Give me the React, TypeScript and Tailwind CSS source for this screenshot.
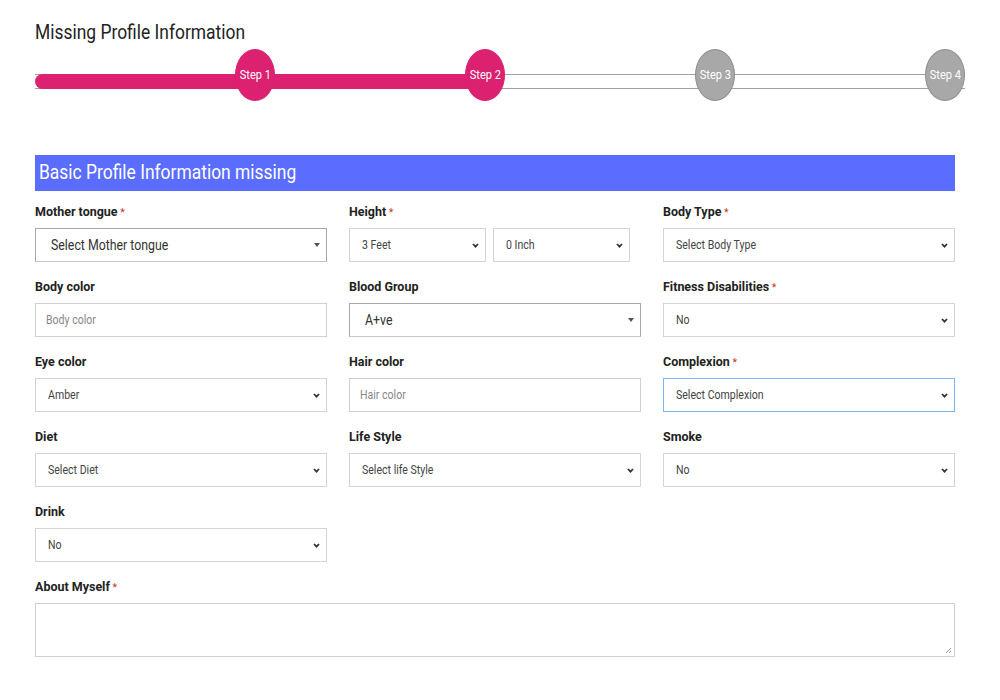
import React from "react";

const Chevron = () => (
  <svg width="7" height="5" viewBox="0 0 7 5" className="shrink-0">
    <path d="M1 1 L3.5 3.6 L6 1" fill="none" stroke="#333" strokeWidth="1.8" />
  </svg>
);

const Tri = () => (
  <svg width="6" height="4" viewBox="0 0 6 4" className="shrink-0">
    <path d="M0 0 L6 0 L3 4 Z" fill="#555" />
  </svg>
);

function Sq({ children, s = "n" }: { children: React.ReactNode; s?: "n" | "m" | "l" }) {
  const cls =
    s === "l"
      ? "inline-block whitespace-nowrap origin-left scale-x-[0.96]"
      : s === "m"
      ? "inline-block whitespace-nowrap origin-left scale-x-[0.83]"
      : "inline-block whitespace-nowrap origin-left scale-x-[0.88]";
  return <span className={cls}>{children}</span>;
}

function Label({ text, req }: { text: string; req?: boolean }) {
  return (
    <div className="h-[17px] text-[13px] font-bold text-[#222] leading-[13px] mb-[6px]">
      <Sq s="l">
        {text}
        {req && <span className="text-[#c0392b] font-normal text-[11px]"> *</span>}
      </Sq>
    </div>
  );
}

function Select({ value, focus, w }: { value: string; focus?: boolean; w?: string }) {
  return (
    <div
      className={`h-[34px] ${w ?? "w-full"} flex items-center justify-between pl-[12px] pr-[6px] bg-white border ${
        focus ? "border-[#7fb5f0]" : "border-[#d4d4d4]"
      } text-[12px] text-[#444]`}
    >
      <Sq>{value}</Sq>
      <Chevron />
    </div>
  );
}

function OldSelect({ value }: { value: string }) {
  return (
    <div className="h-[34px] w-full flex items-center justify-between pl-[15px] pr-[6px] bg-white border border-[#a9a9a9] border-b-[#c8c8c8] text-[14px] text-[#333]">
      <Sq>{value}</Sq>
      <Tri />
    </div>
  );
}

function Input({ ph }: { ph: string }) {
  return (
    <div className="h-[34px] w-full flex items-center pl-[10px] bg-white border border-[#cfcfcf] text-[12px] text-[#888]">
      <Sq>{ph}</Sq>
    </div>
  );
}

const steps = [
  { n: 1, on: true },
  { n: 2, on: true },
  { n: 3, on: false },
  { n: 4, on: false },
];

export default function App() {
  return (
    <div
      className="w-[1000px] h-[700px] bg-white overflow-hidden"
      style={{ fontFamily: "'Roboto', 'Liberation Sans', sans-serif" }}
    >
      <div className="pl-[35px] pt-[18px]">
        <h1 className="text-[21px] text-[#222] leading-[28px] h-[28px]">
          <Sq s="m">Missing Profile Information</Sq>
        </h1>
        <div className="relative w-[930px] h-[52px] mt-[3px]">
          <div className="absolute left-0 right-0 top-[25px] h-[15px] border-t border-b border-[#a0a0a0]" />
          <div className="absolute left-0 w-[450px] top-[25px] h-[15px] bg-[#dc2170] rounded-l-full" />
          <div className="relative flex justify-end gap-[190px] h-full">
            {steps.map((s) => (
              <div
                key={s.n}
                className={`w-[40px] h-[52px] rounded-[50%] flex items-center justify-center text-white text-[13px] border ${
                  s.on ? "bg-[#dc2170] border-[#dc2170]" : "bg-[#a8a8a8] border-[#8e8e8e]"
                }`}
              >
                <span className="whitespace-nowrap -mt-[1px] inline-block scale-x-[0.85]">Step {s.n}</span>
              </div>
            ))}
          </div>
        </div>
      </div>

      <div className="pl-[35px] pr-[45px] mt-[54px]">
        <div className="h-[36px] bg-[#5a6dff] flex items-center pl-[4px] text-white text-[21px]">
          <Sq s="m">Basic Profile Information missing</Sq>
        </div>

        <div className="grid grid-cols-3 gap-x-[22px] gap-y-[18px] mt-[14px]">
          <div>
            <Label text="Mother tongue" req />
            <OldSelect value="Select Mother tongue" />
          </div>
          <div>
            <Label text="Height" req />
            <div className="flex gap-[7px]">
              <Select value="3 Feet" w="w-[137px]" />
              <Select value="0 Inch" w="w-[137px]" />
            </div>
          </div>
          <div>
            <Label text="Body Type" req />
            <Select value="Select Body Type" />
          </div>

          <div>
            <Label text="Body color" />
            <Input ph="Body color" />
          </div>
          <div>
            <Label text="Blood Group" />
            <OldSelect value="A+ve" />
          </div>
          <div>
            <Label text="Fitness Disabilities" req />
            <Select value="No" />
          </div>

          <div>
            <Label text="Eye color" />
            <Select value="Amber" />
          </div>
          <div>
            <Label text="Hair color" />
            <Input ph="Hair color" />
          </div>
          <div>
            <Label text="Complexion" req />
            <Select value="Select Complexion" focus />
          </div>

          <div>
            <Label text="Diet" />
            <Select value="Select Diet" />
          </div>
          <div>
            <Label text="Life Style" />
            <Select value="Select life Style" />
          </div>
          <div>
            <Label text="Smoke" />
            <Select value="No" />
          </div>

          <div>
            <Label text="Drink" />
            <Select value="No" />
          </div>
          <div />
          <div />

          <div className="col-span-3">
            <Label text="About Myself" req />
            <div className="relative h-[54px] w-full border border-[#cfcfcf] bg-white">
              <svg width="7" height="7" viewBox="0 0 7 7" className="absolute right-[2px] bottom-[2px]">
                <path d="M6 1 L1 6 M6 4 L4 6" stroke="#999" strokeWidth="1" />
              </svg>
            </div>
          </div>
        </div>
      </div>
    </div>
  );
}
